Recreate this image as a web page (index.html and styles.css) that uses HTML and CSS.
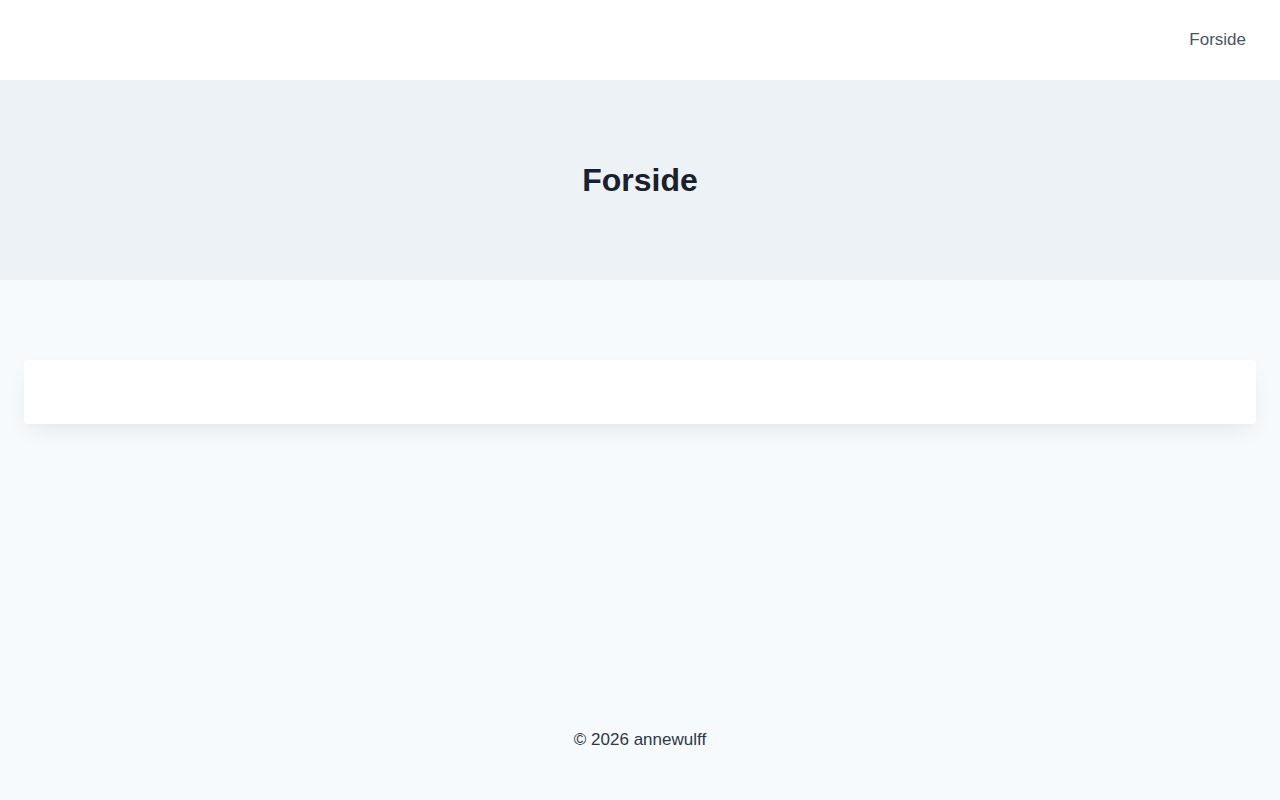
FILE: index.html
```html
<!DOCTYPE html>
<html lang="da">

<head>
  <meta name="viewport" content="width=device-width, initial-scale=1.0">
  <title>Forside</title>
  <link rel="stylesheet" href="styles.css">
</head>

<body>
  <header class="site-header">
    <nav>
      <ul class="nav-list">
        <li><a href="#">Forside</a></li>
      </ul>
    </nav>
  </header>
  <section class="hero">
    <h1>Forside</h1>
  </section>
  <main class="content">
    <div class="card"></div>
  </main>
  <footer class="site-footer">
    <p>&copy; 2026 annewulff</p>
  </footer>
</body>

</html>
```
FILE: styles.css
```css
html,
body {
  margin: 0;
  padding: 0;
  background-color: #f7fafc;
  font-family: "Liberation Sans", Arial, sans-serif;
}

body {
  min-height: 100vh;
  display: flex;
  flex-direction: column;
}

.site-header {
  height: 80px;
  background-color: #fff;
  display: flex;
  align-items: center;
  justify-content: flex-end;
  padding: 0 24px;
}

.nav-list {
  list-style-type: none;
  margin: 0;
  padding: 0;
  display: flex;
}

.nav-list a {
  display: block;
  padding: 8px 10px;
  color: #4a5568;
  font-size: 17px;
  text-decoration: none;
}

.hero {
  height: 200px;
  background-color: #edf2f7;
  display: flex;
  align-items: center;
  justify-content: center;
}

.hero h1 {
  margin: 0;
  font-size: 32px;
  font-weight: bold;
  color: #1a202c;
}

.content {
  flex: 1;
  padding: 80px 24px 0;
}

.card {
  height: 64px;
  background-color: #fff;
  border-radius: 4px;
  box-shadow: 0 10px 25px -5px rgba(0, 0, 0, 0.07), 0 4px 8px -4px rgba(0, 0, 0, 0.03);
}

.site-footer {
  padding: 30px 0 50px;
  text-align: center;
}

.site-footer p {
  margin: 0;
  font-size: 17px;
  line-height: 20px;
  color: #2d3748;
}
```
